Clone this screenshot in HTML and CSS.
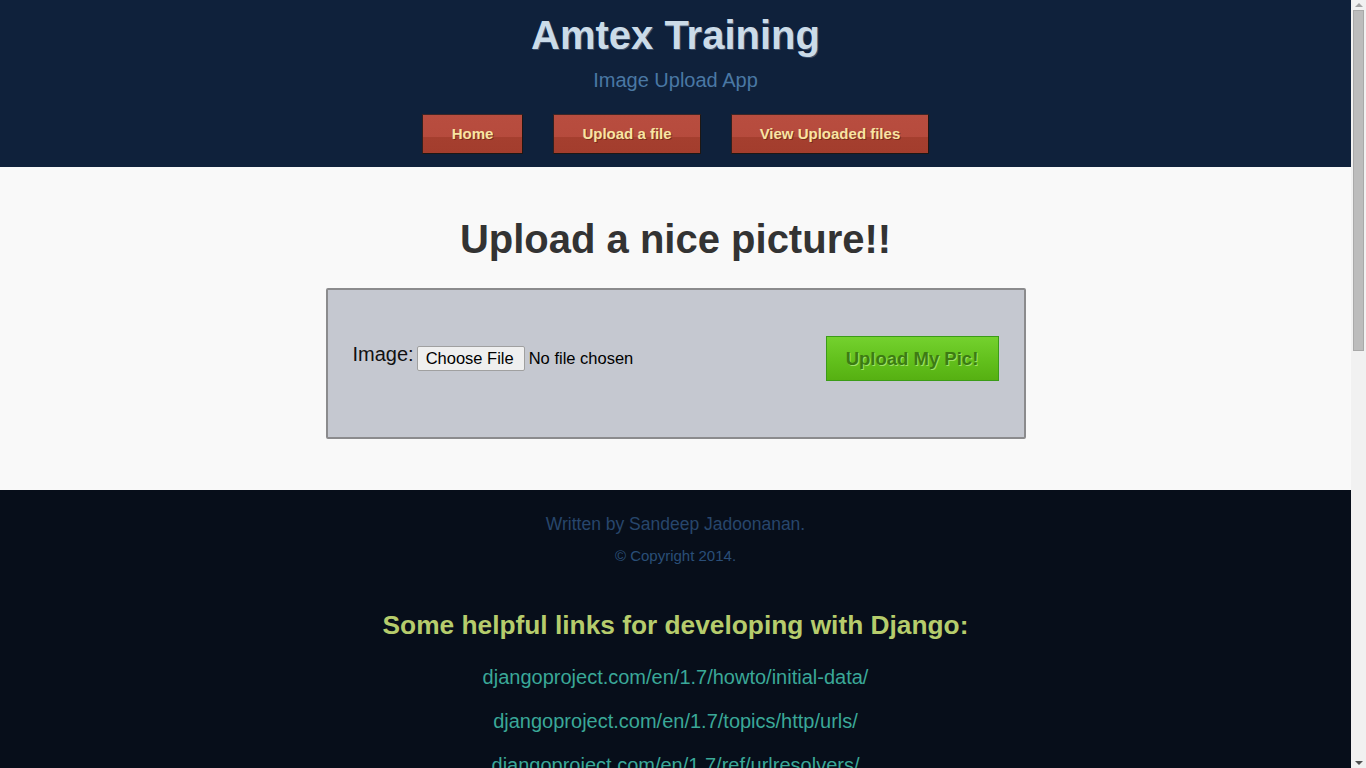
FILE: index.html
```html
<!DOCTYPE html>
<html lang="en">
<head>
<meta charset="utf-8">
<title>Amtex Training - Image Upload App</title>
<link rel="stylesheet" href="styles.css">
</head>
<body>
<div class="page">
<header class="site-header">
  <h1 class="brand">Amtex Training</h1>
  <p class="tagline">Image Upload App</p>
  <nav class="nav">
    <a class="nav-btn" href="#">Home</a>
    <a class="nav-btn" href="#">Upload a file</a>
    <a class="nav-btn" href="#">View Uploaded files</a>
  </nav>
</header>
<main class="content">
  <h2 class="page-title">Upload a nice picture!!</h2>
  <form class="upload-box">
    <div class="field">
      <label class="field-label" for="img">Image:</label>
      <input class="file-input" id="img" type="file">
    </div>
    <button class="submit-btn" type="button">Upload My Pic!</button>
  </form>
</main>
<footer class="site-footer">
  <p class="credit">Written by Sandeep Jadoonanan.</p>
  <p class="copyright">&copy; Copyright 2014.</p>
  <h3 class="links-title">Some helpful links for developing with Django:</h3>
  <ul class="links">
    <li><a href="#">djangoproject.com/en/1.7/howto/initial-data/</a></li>
    <li><a href="#">djangoproject.com/en/1.7/topics/http/urls/</a></li>
    <li><a href="#">djangoproject.com/en/1.7/ref/urlresolvers/</a></li>
    <li><a href="#">djangoproject.com/en/1.7/topics/http/file-uploads/</a></li>
    <li><a href="#">djangoproject.com/en/1.7/ref/files/uploads/</a></li>
    <li><a href="#">djangoproject.com/en/1.7/topics/files/</a></li>
    <li><a href="#">djangoproject.com/en/1.7/ref/models/fields/</a></li>
    <li><a href="#">djangoproject.com/en/1.7/topics/forms/</a></li>
    <li><a href="#">djangoproject.com/en/1.7/ref/forms/fields/</a></li>
    <li><a href="#">djangoproject.com/en/1.7/topics/templates/</a></li>
    <li><a href="#">djangoproject.com/en/1.7/ref/templates/builtins/</a></li>
    <li><a href="#">djangoproject.com/en/1.7/howto/static-files/</a></li>
    <li><a href="#">djangoproject.com/en/1.7/ref/settings/</a></li>
    <li><a href="#">djangoproject.com/en/1.7/topics/http/views/</a></li>
    <li><a href="#">djangoproject.com/en/1.7/topics/http/shortcuts/</a></li>
    <li><a href="#">djangoproject.com/en/1.7/ref/request-response/</a></li>
    <li><a href="#">djangoproject.com/en/1.7/topics/db/models/</a></li>
    <li><a href="#">djangoproject.com/en/1.7/topics/db/queries/</a></li>
    <li><a href="#">djangoproject.com/en/1.7/ref/contrib/admin/</a></li>
    <li><a href="#">djangoproject.com/en/1.7/topics/migrations/</a></li>
    <li><a href="#">djangoproject.com/en/1.7/intro/tutorial01/</a></li>
  </ul>
</footer>
</div>
<div class="scrollbar" aria-hidden="true">
  <span class="sb-arrow sb-up"></span>
  <span class="sb-track"><span class="sb-thumb"></span></span>
  <span class="sb-arrow sb-down"></span>
</div>
</body>
</html>
```
FILE: styles.css
```css
html, body {
  margin: 0;
  padding: 0;
}
body {
  font-family: "Liberation Sans", Arial, sans-serif;
  background: #070e1a;
}
.page {
  margin-right: 15px;
}

/* Header */
.site-header {
  background: #0f213b;
  text-align: center;
  padding: 12px 0 13px;
}
.brand {
  margin: 0;
  font-size: 40px;
  line-height: 46px;
  font-weight: bold;
  color: #cbdbe8;
  text-shadow: 1px 1px 0 rgba(120, 140, 170, 0.45);
}
.tagline {
  margin: 10px 0 0;
  font-size: 20px;
  line-height: 24px;
  color: #4a78a4;
}
.nav {
  margin-top: 22px;
  display: flex;
  justify-content: center;
  gap: 30px;
}
.nav-btn {
  display: block;
  height: 38px;
  line-height: 38px;
  padding: 0 28px;
  font-size: 15px;
  font-weight: bold;
  color: #f8e4a2;
  text-decoration: none;
  text-shadow: 1px 1px 0 rgba(110, 40, 25, 0.8);
  background: linear-gradient(to bottom, #b84d3f 0%, #b64b3d 58%, #a53f2f 58%, #a33d2d 100%);
  border: 1px solid #1d1714;
  border-top-color: #3e2626;
  border-left-color: #33201e;
}
.nav-btn:first-child {
  padding: 0 29px;
}

/* Main */
.content {
  background: #f9f9f9;
  padding: 49px 0 51px;
}
.page-title {
  margin: 0;
  text-align: center;
  font-size: 40px;
  line-height: 46px;
  font-weight: bold;
  color: #333333;
}
.upload-box {
  box-sizing: border-box;
  width: 700px;
  height: 151px;
  margin: 26px auto 0;
  background: #c5c8d0;
  border: 2px solid #8b8b8d;
  border-radius: 2px;
  padding: 46px 25px 0 25px;
  display: flex;
  justify-content: space-between;
  align-items: flex-start;
}
.field {
  display: flex;
  align-items: baseline;
  margin-top: 10px;
}
.field-label {
  font-size: 20px;
  color: #111;
  margin-right: 3px;
  position: relative;
  top: -3px;
}
.file-input {
  font-family: "Liberation Sans", Arial, sans-serif;
  font-size: 16.5px;
  color: #000;
}
.file-input::file-selector-button {
  font-family: "Liberation Sans", Arial, sans-serif;
  font-size: 16.5px;
  padding: 2px 10px 2px 8px;
  margin-right: 4px;
  background: #efefef;
  border: 1px solid #767676;
  border-color: #a0a0a0;
  border-radius: 2px;
  color: #000;
}
.submit-btn {
  width: 173px;
  height: 45px;
  font-family: "Liberation Sans", Arial, sans-serif;
  font-size: 18.5px;
  font-weight: bold;
  color: #3d7b12;
  text-shadow: 1px 1px 0 #9ee266;
  background: linear-gradient(to bottom, #74d12e 0%, #62c01c 55%, #56b012 100%);
  border: 1px solid #3b9c17;
  border-radius: 0;
  padding: 0;
}

/* Footer */
.site-footer {
  background: #070e1a;
  text-align: center;
  padding: 23px 0 40px;
}
.credit {
  margin: 0;
  font-size: 17.5px;
  line-height: 22px;
  color: #27466c;
}
.copyright {
  margin: 12px 0 0;
  font-size: 15px;
  line-height: 18px;
  color: #2a4e78;
}
.links-title {
  margin: 45px 0 0;
  font-size: 26.3px;
  line-height: 30px;
  font-weight: bold;
  color: #b6cc6c;
}
.links {
  list-style: none;
  margin: 25px 0 0;
  padding: 0;
}
.links li {
  font-size: 20px;
  line-height: 24px;
  margin-bottom: 20px;
}
.links a {
  color: #3aa898;
  text-decoration: none;
}

/* Window scrollbar (browser chrome drawn over the page edge) */
.scrollbar {
  position: fixed;
  top: 0;
  right: 0;
  width: 15px;
  height: 100vh;
  background: #f1f1f1;
  display: flex;
  flex-direction: column;
  align-items: center;
}
.sb-arrow {
  width: 0;
  height: 0;
  box-sizing: border-box;
}
.sb-up {
  margin: 3px 0;
  border-left: 4px solid transparent;
  border-right: 4px solid transparent;
  border-bottom: 4px solid #a3a3a3;
}
.sb-track {
  flex: 1;
  width: 100%;
  padding: 0 2px;
  box-sizing: border-box;
}
.sb-thumb {
  display: block;
  height: 341px;
  background: #bcbcbc;
  border: 1px solid #a9a9a9;
  box-sizing: border-box;
}
.sb-down {
  margin: 0 0 3px;
  border-left: 4px solid transparent;
  border-right: 4px solid transparent;
  border-top: 4px solid #505050;
}
```
